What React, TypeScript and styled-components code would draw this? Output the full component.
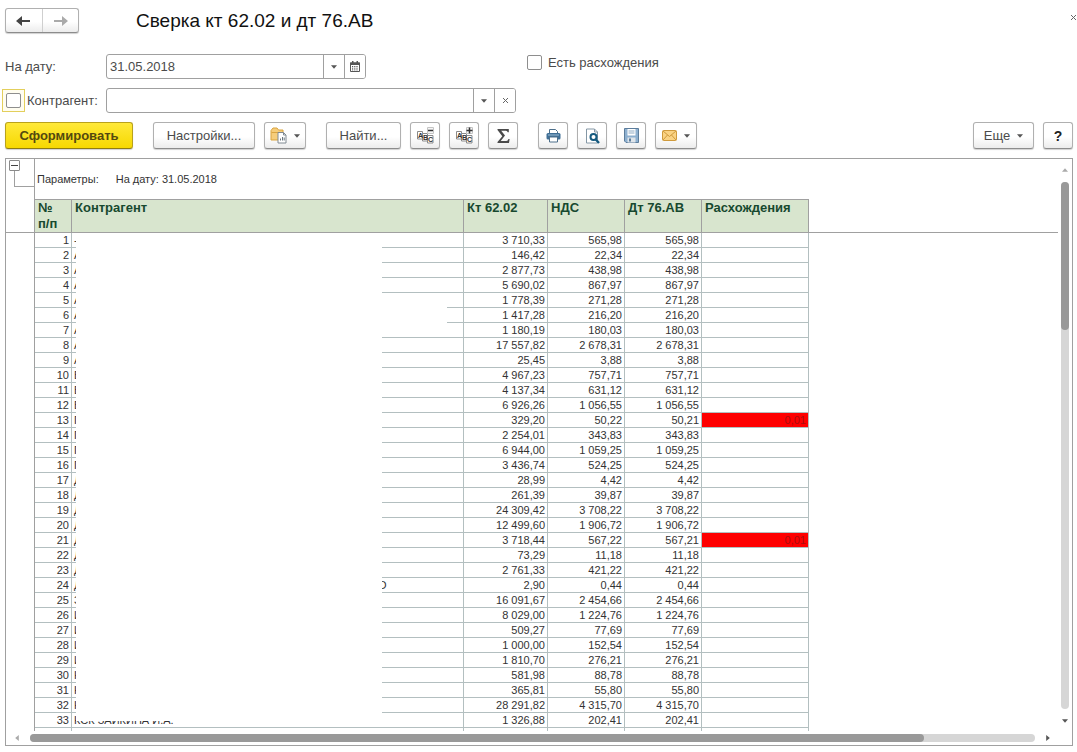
import React from "react";
import styled, { createGlobalStyle, css } from "styled-components";

const GlobalStyle = createGlobalStyle`
  * { box-sizing: border-box; }
  body {
    margin: 0;
    background: #fff;
    color: #4b4b4b;
    font-family: "Liberation Sans", Arial, sans-serif;
    font-size: 13px;
  }
  button, input { font: inherit; color: inherit; }
`;

const line = "#a0a0a0";
const grid = "#b3bfc0";

const Page = styled.div`
  display: flex;
  flex-direction: column;
  height: 100vh;
  padding: 8px 4px 6px 5px;
  overflow: hidden;
`;

const raised = css`
  border: 1px solid #b0b0b0;
  border-bottom-color: #8c8c8c;
  border-radius: 3px;
  background: linear-gradient(#fff 55%, #ececec);
  box-shadow: 0 1px 1px #d0d0d0;
`;

const TitleBar = styled.header`
  display: flex;
  align-items: center;
  height: 25px;
`;

const NavGroup = styled.div`
  ${raised}
  display: flex;
  width: 74px;
  height: 25px;
  margin-right: 57px;
`;

const NavButton = styled.button`
  flex: 1;
  display: flex;
  align-items: center;
  justify-content: center;
  padding: 0;
  border: 0;
  background: none;
  & + & { border-left: 1px solid #cfcfcf; }
`;

const Title = styled.h1`
  flex: 1;
  margin: 0;
  font-size: 19px;
  line-height: 24px;
  font-weight: 400;
  color: #111;
`;

const CloseButton = styled.button`
  width: 7px;
  height: 18px;
  margin-right: -4px;
  padding: 0;
  border: 0;
  background: none;
  display: flex;
  align-items: center;
  align-self: flex-start;
`;

const FormRow = styled.div<{ $gap: number }>`
  display: flex;
  align-items: center;
  height: 25px;
  margin-top: ${(p) => p.$gap}px;
`;

const FieldLabel = styled.label`
  flex: 0 0 101px;
`;

const CheckField = styled.div`
  flex: 0 0 101px;
  display: flex;
  align-items: center;
  gap: 2px;
  margin-left: -3px;
  margin-right: 3px;
`;

const FocusFrame = styled.span`
  display: flex;
  padding: 3px;
  border: 1px solid #e3cf5c;
  background: #fffdf0;
`;

const CheckBox = styled.input`
  appearance: none;
  width: 15px;
  height: 15px;
  margin: 0;
  border: 1px solid #8e8e8e;
  border-radius: 2px;
  background: #fff;
`;

const CheckLabel = styled.label`
  display: flex;
  align-items: center;
  align-self: flex-start;
  gap: 6px;
  height: 17px;
  margin-left: 161px;
`;

const Combo = styled.div<{ $width: number }>`
  display: flex;
  width: ${(p) => p.$width}px;
  height: 25px;
  border: 1px solid ${line};
  border-radius: 3px;
  overflow: hidden;
`;

const ComboInput = styled.input`
  flex: 1;
  min-width: 0;
  padding: 0 3px;
  border: 0;
  outline: 0;
  background: transparent;
`;

const ComboButton = styled.button`
  display: flex;
  align-items: center;
  justify-content: center;
  width: 21px;
  padding: 0;
  border: 0;
  border-left: 1px solid ${line};
  background: #fff;
`;

const Toolbar = styled.div`
  display: flex;
  gap: 20px;
  margin-top: 9px;
`;

const ToolGroup = styled.div<{ $end?: boolean }>`
  display: flex;
  gap: 9px;
  ${(p) => p.$end && "margin-left: auto;"}
`;

const ToolButton = styled.button<{ $width: number; $primary?: boolean }>`
  ${raised}
  display: flex;
  align-items: center;
  justify-content: center;
  gap: 7px;
  width: ${(p) => p.$width}px;
  height: 27px;
  padding: 0;
  white-space: nowrap;
  ${(p) =>
    p.$primary &&
    css`
      border-color: #b9a21c;
      border-bottom-color: #8f7c10;
      background: linear-gradient(#ffe93a, #f6d800);
      font-weight: 700;
      color: #54490f;
    `}
`;

const HelpMark = styled.span`
  font-size: 14px;
  font-weight: 700;
  color: #222;
`;

const Sheet = styled.main`
  flex: 1;
  min-height: 0;
  display: grid;
  grid-template-columns: 29px minmax(0, 1fr) 14px;
  grid-template-rows: minmax(0, 1fr) 14px;
  margin-top: 9px;
  border: 1px solid ${line};
`;

const Gutter = styled.div`
  border-right: 1px solid ${line};
`;

const GutterHead = styled.div`
  display: flex;
  flex-direction: column;
  align-items: flex-start;
  height: 74px;
  padding: 1px 0 0 3px;
  border-bottom: 1px solid ${line};
`;

const Collapse = styled.button`
  display: flex;
  align-items: center;
  justify-content: center;
  width: 11px;
  height: 11px;
  padding: 0;
  border: 1px solid #8a8a8a;
  border-radius: 1px;
  background: #fff;
`;

const Bracket = styled.div`
  align-self: stretch;
  height: 16px;
  margin-left: 5px;
  border-left: 1px solid ${line};
  border-bottom: 1px solid ${line};
`;

const Viewport = styled.div`
  min-width: 0;
  overflow: hidden;
`;

const Params = styled.div`
  display: flex;
  gap: 17px;
  height: 40px;
  padding: 13px 0 0 2px;
  font-size: 11px;
  line-height: 14px;
  color: #333;
`;

const TableArea = styled.div`
  position: relative;
`;

const Table = styled.table`
  width: 100%;
  table-layout: fixed;
  border-collapse: separate;
  border-spacing: 0;
`;

const Head = styled.th`
  height: 34px;
  padding: 0 3px;
  border: solid ${line};
  border-width: 1px 1px 1px 0;
  background: #d8e5ce;
  color: #17492f;
  font-size: 13px;
  line-height: 16px;
  text-align: left;
  vertical-align: top;
`;

const HeadRest = styled.td`
  border-bottom: 1px solid ${line};
`;

const Cell = styled.td<{ $left?: boolean; $alert?: boolean }>`
  height: 15px;
  padding: 0 2px;
  border: solid ${grid};
  border-width: 0 1px 1px 0;
  font-size: 11px;
  line-height: 14px;
  color: ${(p) => (p.$alert ? "#a80f0f" : "#333")};
  background: ${(p) => (p.$alert ? "#fe0000" : "transparent")};
  text-align: ${(p) => (p.$left ? "left" : "right")};
  white-space: nowrap;
  overflow: hidden;
`;

const NameParts = styled.div`
  display: grid;
  grid-template-columns: 304px auto;
`;

const Cover = styled.div<{ $x: number; $y: number; $w: number; $h: number }>`
  position: absolute;
  left: ${(p) => p.$x}px;
  top: ${(p) => p.$y}px;
  width: ${(p) => p.$w}px;
  height: ${(p) => p.$h}px;
  background: #fff;
`;

const VScroll = styled.div`
  display: flex;
  flex-direction: column;
  align-items: center;
  gap: 9px;
  padding: 8px 0 7px;
`;

const HScroll = styled.div`
  grid-column: 1 / 3;
  display: flex;
  align-items: center;
  gap: 10px;
  padding: 0 7px 0 8px;
`;

const Track = styled.div<{ $vertical?: boolean }>`
  flex: 1;
  display: flex;
  flex-direction: ${(p) => (p.$vertical ? "column" : "row")};
  ${(p) => (p.$vertical ? "width: 8px;" : "height: 8px;")}
  border-radius: 4px;
  background: #d6d6d6;
`;

const Thumb = styled.div<{ $share: number }>`
  flex: 0 0 ${(p) => p.$share}%;
  border-radius: 4px;
  background: #999;
`;

const Caret = ({ dir = "down", color = "#555" }: { dir?: "up" | "down" | "left" | "right"; color?: string }) => {
  const d = { down: "M0 1h5L2.500 4z", up: "M0 4h5L2.500 1z", left: "M4 0v5L1 2.500z", right: "M1 0v5L4 2.500z" }[dir];
  return (
    <svg width="6" height="6" viewBox="0 0 5 5" fill={color} aria-hidden="true">
      <path d={d} />
    </svg>
  );
};

const Arrow = ({ color, flip }: { color: string; flip?: boolean }) => (
  <svg width="15" height="12" viewBox="0 0 15 12" fill={color} aria-hidden="true">
    <path d={flip ? "M9 1l6 5-6 5V7H1V5h8z" : "M6 1L0 6l6 5V7h8V5H6z"} />
  </svg>
);

const Cross = () => (
  <svg width="7" height="7" viewBox="0 0 7 7" stroke="#666" aria-hidden="true">
    <path d="M1 1l5 5M6 1L1 6" />
  </svg>
);

const CalendarIcon = () => (
  <svg width="10" height="11" viewBox="0 0 10 11" aria-hidden="true">
    <path d="M.5 2h9v8.500h-9z" fill="#fff" stroke="#555" />
    <path d="M0 1.500h10v2.500H0zM2 0h1.500v2H2zM6.500 0H8v2H6.500z" fill="#555" />
    <path d="M2 5.500h6M2 7.200h6M2 8.900h6" stroke="#555" strokeDasharray="1.200 1" />
  </svg>
);

const FolderIcon = () => (
  <svg width="17" height="17" viewBox="0 0 17 17" aria-hidden="true">
    <path d="M1 13V3.500L3 1h4l1.500 2H13v10z" fill="#f6cd7b" stroke="#d9a441" />
    <path d="M1.500 5.500h11" stroke="#d9a441" />
    <path d="M8 5.500h5.500L16 8v8H8z" fill="#fff" stroke="#808a92" />
    <path d="M13.500 5.500V8H16" fill="none" stroke="#808a92" />
    <path d="M10.500 13.500v-2M12.500 13.500V10M14.200 13.500v-3" stroke="#6b7780" />
  </svg>
);

const AbcIcon = ({ plus }: { plus?: boolean }) => (
  <svg width="17" height="17" viewBox="0 0 17 17" aria-hidden="true">
    <g fill="#fff" stroke="#8a8a8a">
      <path d="M.5 4.500h5v7.500h-5z" />
      <path d="M5.500 6.500h5v7.500h-5z" />
      <path d="M10.500 8.500h5.500v7.500h-5.500z" />
    </g>
    <g fontFamily="Liberation Sans" fontSize="7" fontWeight="700" fill="#333">
      <text x="1" y="11">A</text>
      <text x="6" y="13">B</text>
      <text x="11" y="15">C</text>
    </g>
    <path d="M10.500 .5h6v6h-6z" fill="#f6f6f6" stroke="#c4c4c4" />
    <path d={plus ? "M10.500 3.500h6M13.500 .5v6" : "M11 3.500h5"} stroke="#333" strokeWidth="1.500" />
  </svg>
);

const SigmaIcon = () => (
  <svg width="13" height="14" viewBox="0 0 13 14" fill="#4a4a4a" aria-hidden="true">
    <path d="M.5 0h11.300v3.300h-1.100Q10.400 1.700 9 1.700H4.200L8 6.600 3.700 12h5.600q1.700 0 2.200-1.900h1.100L12 14H.5v-1L5.300 7.300.5 1z" />
  </svg>
);

const PrinterIcon = () => (
  <svg width="15" height="15" viewBox="0 0 15 15" aria-hidden="true">
    <path d="M3.500 6V1.500h6l2 2V6" fill="#fff" stroke="#4d6f8a" />
    <rect x=".5" y="5" width="14" height="6.500" rx="1.500" fill="#3f6f96" />
    <path d="M2 7h11" stroke="#9dbdd4" />
    <path d="M3.500 9h8v5h-8z" fill="#fff" stroke="#4d6f8a" />
  </svg>
);

const PreviewIcon = () => (
  <svg width="15" height="16" viewBox="0 0 15 16" aria-hidden="true">
    <path d="M1.500 1h8l3 3v11h-11z" fill="#fff" stroke="#8497a5" />
    <path d="M9.500 1v3h3" fill="none" stroke="#8497a5" />
    <circle cx="8.500" cy="9" r="3" fill="#fff" stroke="#155a7f" strokeWidth="2" />
    <path d="M10.800 11.500l3.200 3.500" stroke="#155a7f" strokeWidth="2.400" />
  </svg>
);

const DiskIcon = () => (
  <svg width="15" height="15" viewBox="0 0 15 15" aria-hidden="true">
    <path d="M.5.5h14v14H2l-1.500-1.500z" fill="#8db0d0" stroke="#5c7d9c" />
    <path d="M3.500 1h8v6.500h-8z" fill="#fff" />
    <path d="M4.500 3h6M4.500 5h6" stroke="#8fabc4" />
    <path d="M3.500 9.500h8v5h-8z" fill="#dfe5ea" />
    <path d="M5 10.500h2v3H5z" fill="#5c7d9c" />
  </svg>
);

const MailIcon = () => (
  <svg width="15" height="11" viewBox="0 0 15 11" aria-hidden="true">
    <rect x=".5" y=".5" width="14" height="10" rx="1" fill="#fad384" stroke="#cf9a3c" />
    <path d="M1 1l6.500 5.500L14 1M1 10l4.500-5M14 10L9.500 5" fill="none" stroke="#cf9a3c" />
  </svg>
);

type Row = [name: string, credit: string, vat: string, debit: string, diff?: string];

const rows: Row[] = [
  ["-", "3 710,33", "565,98", "565,98"],
  ["А", "146,42", "22,34", "22,34"],
  ["А", "2 877,73", "438,98", "438,98"],
  ["А", "5 690,02", "867,97", "867,97"],
  ["А", "1 778,39", "271,28", "271,28"],
  ["А", "1 417,28", "216,20", "216,20"],
  ["А", "1 180,19", "180,03", "180,03"],
  ["А", "17 557,82", "2 678,31", "2 678,31"],
  ["А", "25,45", "3,88", "3,88"],
  ["Б", "4 967,23", "757,71", "757,71"],
  ["В", "4 137,34", "631,12", "631,12"],
  ["В", "6 926,26", "1 056,55", "1 056,55"],
  ["Г", "329,20", "50,22", "50,21", "0,01"],
  ["Г", "2 254,01", "343,83", "343,83"],
  ["Г", "6 944,00", "1 059,25", "1 059,25"],
  ["Г", "3 436,74", "524,25", "524,25"],
  ["Д", "28,99", "4,42", "4,42"],
  ["Д", "261,39", "39,87", "39,87"],
  ["Д", "24 309,42", "3 708,22", "3 708,22"],
  ["Д", "12 499,60", "1 906,72", "1 906,72"],
  ["Д", "3 718,44", "567,22", "567,21", "0,01"],
  ["Д", "73,29", "11,18", "11,18"],
  ["Д", "2 761,33", "421,22", "421,22"],
  ["Д|О", "2,90", "0,44", "0,44"],
  ["З", "16 091,67", "2 454,66", "2 454,66"],
  ["И", "8 029,00", "1 224,76", "1 224,76"],
  ["И", "509,27", "77,69", "77,69"],
  ["И", "1 000,00", "152,54", "152,54"],
  ["И", "1 810,70", "276,21", "276,21"],
  ["К", "581,98", "88,78", "88,78"],
  ["К", "365,81", "55,80", "55,80"],
  ["К", "28 291,82", "4 315,70", "4 315,70"],
  ["КСК ЗАЙКИНА И.А.", "1 326,88", "202,41", "202,41"],
];

const Name = ({ value }: { value: string }) => {
  const [start, end] = value.split("|");
  return end ? (
    <NameParts>
      <span>{start}</span>
      <span>{end}</span>
    </NameParts>
  ) : (
    <>{value}</>
  );
};

export default function App() {
  return (
    <Page>
      <GlobalStyle />
      <TitleBar>
        <NavGroup>
          <NavButton aria-label="Назад"><Arrow color="#444" /></NavButton>
          <NavButton aria-label="Вперед"><Arrow color="#aaa" flip /></NavButton>
        </NavGroup>
        <Title>Сверка кт 62.02 и дт 76.АВ</Title>
        <CloseButton aria-label="Закрыть"><Cross /></CloseButton>
      </TitleBar>

      <FormRow $gap={21}>
        <FieldLabel htmlFor="date">На дату:</FieldLabel>
        <Combo $width={260}>
          <ComboInput id="date" defaultValue="31.05.2018" />
          <ComboButton aria-label="Выбрать"><Caret /></ComboButton>
          <ComboButton aria-label="Календарь"><CalendarIcon /></ComboButton>
        </Combo>
        <CheckLabel>
          <CheckBox type="checkbox" />
          Есть расхождения
        </CheckLabel>
      </FormRow>

      <FormRow $gap={9}>
        <CheckField>
          <FocusFrame><CheckBox id="partner-on" type="checkbox" /></FocusFrame>
          <label htmlFor="partner-on">Контрагент:</label>
        </CheckField>
        <Combo $width={410}>
          <ComboInput aria-label="Контрагент" />
          <ComboButton aria-label="Выбрать"><Caret /></ComboButton>
          <ComboButton aria-label="Очистить"><Cross /></ComboButton>
        </Combo>
      </FormRow>

      <Toolbar>
        <ToolGroup>
          <ToolButton $width={128} $primary>Сформировать</ToolButton>
        </ToolGroup>
        <ToolGroup>
          <ToolButton $width={102}>Настройки...</ToolButton>
          <ToolButton $width={42} aria-label="Варианты"><FolderIcon /><Caret /></ToolButton>
        </ToolGroup>
        <ToolGroup>
          <ToolButton $width={75}>Найти...</ToolButton>
          <ToolButton $width={30} aria-label="Свернуть группы"><AbcIcon /></ToolButton>
          <ToolButton $width={30} aria-label="Развернуть группы"><AbcIcon plus /></ToolButton>
          <ToolButton $width={30} aria-label="Сумма"><SigmaIcon /></ToolButton>
        </ToolGroup>
        <ToolGroup>
          <ToolButton $width={30} aria-label="Печать"><PrinterIcon /></ToolButton>
          <ToolButton $width={30} aria-label="Просмотр"><PreviewIcon /></ToolButton>
          <ToolButton $width={30} aria-label="Сохранить"><DiskIcon /></ToolButton>
          <ToolButton $width={42} aria-label="Отправить"><MailIcon /><Caret /></ToolButton>
        </ToolGroup>
        <ToolGroup $end>
          <ToolButton $width={61}>Еще<Caret /></ToolButton>
          <ToolButton $width={30}><HelpMark>?</HelpMark></ToolButton>
        </ToolGroup>
      </Toolbar>

      <Sheet>
        <Gutter>
          <GutterHead>
            <Collapse aria-label="Свернуть">
              <svg width="7" height="1" aria-hidden="true"><path d="M0 .5h7" stroke="#444" /></svg>
            </Collapse>
            <Bracket />
          </GutterHead>
        </Gutter>
        <Viewport>
          <Params>
            <span>Параметры:</span>
            <span>На дату: 31.05.2018</span>
          </Params>
          <TableArea>
            <Table>
              <colgroup>
                <col width="37" />
                <col width="392" />
                <col width="84" />
                <col width="77" />
                <col width="77" />
                <col width="107" />
                <col />
              </colgroup>
              <thead>
                <tr>
                  <Head>№<br />п/п</Head>
                  <Head>Контрагент</Head>
                  <Head>Кт 62.02</Head>
                  <Head>НДС</Head>
                  <Head>Дт 76.АВ</Head>
                  <Head>Расхождения</Head>
                  <HeadRest />
                </tr>
              </thead>
              <tbody>
                {rows.map(([name, credit, vat, debit, diff], i) => (
                  <tr key={i}>
                    <Cell>{i + 1}</Cell>
                    <Cell $left><Name value={name} /></Cell>
                    <Cell>{credit}</Cell>
                    <Cell>{vat}</Cell>
                    <Cell>{debit}</Cell>
                    <Cell $alert={!!diff}>{diff}</Cell>
                  </tr>
                ))}
                <tr>
                  <Cell /><Cell /><Cell /><Cell /><Cell /><Cell />
                </tr>
              </tbody>
            </Table>
            <Cover $x={41} $y={35} $w={306} $h={487} />
            <Cover $x={347} $y={104} $w={65} $h={23} />
          </TableArea>
        </Viewport>
        <VScroll>
          <Caret dir="up" color="#aaa" />
          <Track $vertical><Thumb $share={28} /></Track>
          <Caret />
        </VScroll>
        <HScroll>
          <Caret dir="left" color="#aaa" />
          <Track><Thumb $share={89} /></Track>
          <Caret dir="right" />
        </HScroll>
      </Sheet>
    </Page>
  );
}
